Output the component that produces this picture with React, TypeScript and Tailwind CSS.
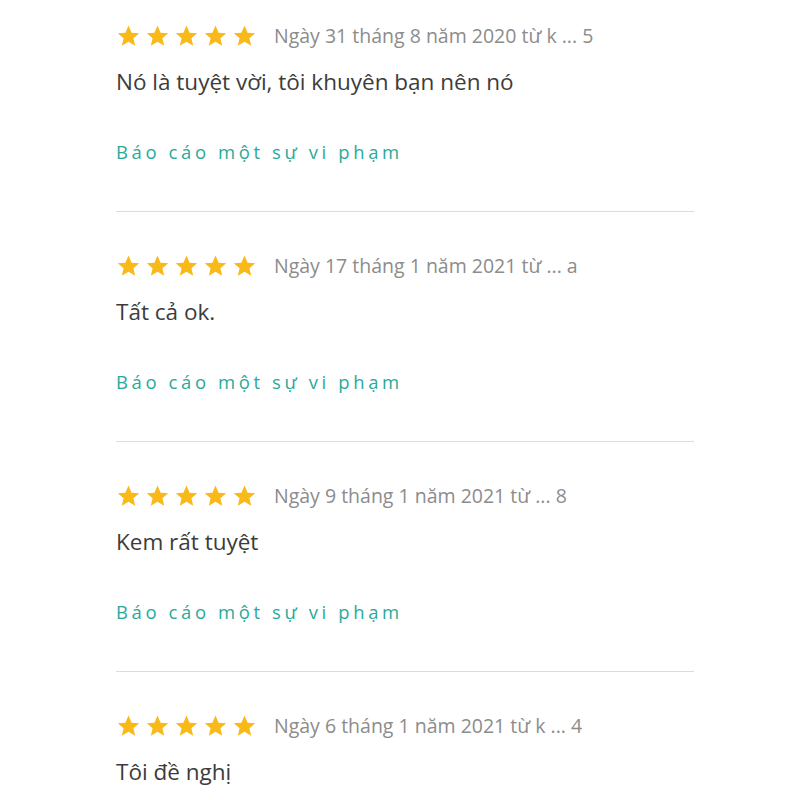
const reviews = [
  { date: 'Ngày 31 tháng 8 năm 2020 từ k ... 5', text: 'Nó là tuyệt vời, tôi khuyên bạn nên nó' },
  { date: 'Ngày 17 tháng 1 năm 2021 từ ... a', text: 'Tất cả ok.' },
  { date: 'Ngày 9 tháng 1 năm 2021 từ ... 8', text: 'Kem rất tuyệt' },
  { date: 'Ngày 6 tháng 1 năm 2021 từ k ... 4', text: 'Tôi đề nghị' },
];

function Star() {
  return (
    <svg width="25" height="24" viewBox="0 0 24 24" className="shrink-0">
      <path
        fill="#f9b918"
        d="M12 1.6l3.1 7.1 7.6.6-5.8 5 1.8 7.5L12 17.8l-6.7 4 1.8-7.5-5.8-5 7.6-.6z"
      />
    </svg>
  );
}

export default function App() {
  return (
    <div className="w-[800px] h-[800px] overflow-hidden bg-white font-['Open_Sans',sans-serif]">
      <div className="ml-[116px] w-[578px] pt-[24px]">
        {reviews.map((review, index) => (
          <div
            key={index}
            className={`border-b border-[#dcdcdc] pb-[47px] ${index === 0 ? '' : 'pt-[42px]'}`}
          >
            <div className="flex items-center h-[24px]">
              <div className="flex gap-[4px]">
                <Star />
                <Star />
                <Star />
                <Star />
                <Star />
              </div>
              <span className="ml-[17px] text-[19.5px] text-[#8c8c8c] leading-[24px] whitespace-nowrap">{review.date}</span>
            </div>
            <p className="mt-[20px] text-[22.5px] leading-[28px] text-[#3c3c3c]">{review.text}</p>
            <a className="block mt-[44px] text-[18.5px] leading-[24px] tracking-[3.6px] text-[#2aa99a]">
              Báo cáo một sự vi phạm
            </a>
          </div>
        ))}
      </div>
    </div>
  );
}
